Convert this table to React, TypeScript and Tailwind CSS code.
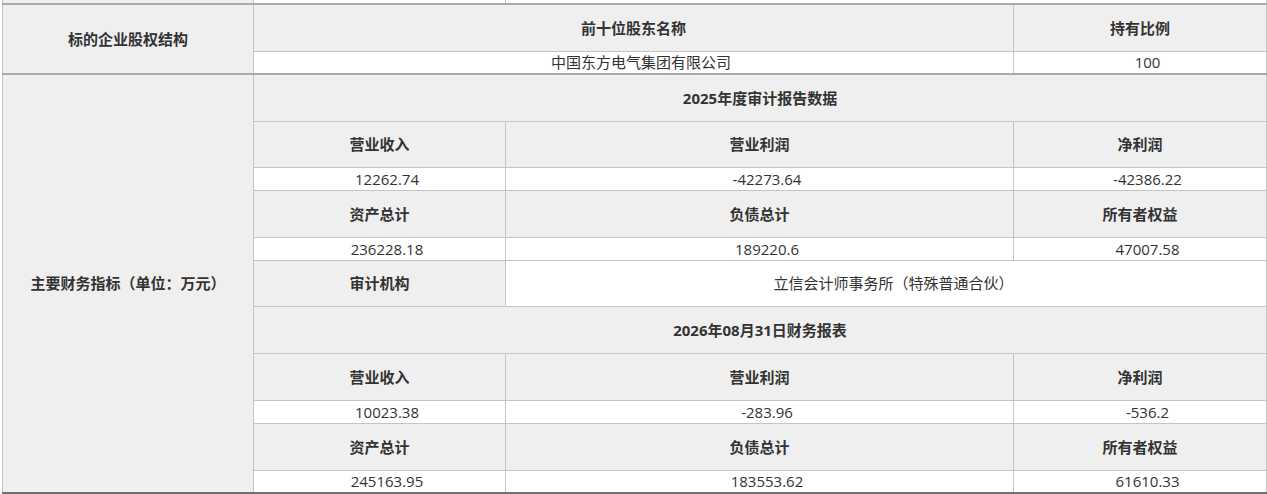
import React from "react";

const th = "border border-[#c4c4c4] bg-[#efefef] font-bold text-center align-middle";
const td = "border border-[#c4c4c4] bg-white text-center align-middle pl-[15px] pr-0";

const hRow = "h-[46px]";
const tRow = "h-[47px]";
const vRow = "h-[23px]";

function Period({
  title,
  rows,
}: {
  title: string;
  rows: { head: [string, string, string]; vals: [string, string, string] }[];
}) {
  return (
    <>
      <tr className={tRow}>
        <td colSpan={3} className={th}>
          {title}
        </td>
      </tr>
      {rows.map((r, i) => (
        <React.Fragment key={i}>
          <tr className={tRow}>
            {r.head.map((h) => (
              <td key={h} className={th}>
                {h}
              </td>
            ))}
          </tr>
          <tr className={vRow}>
            {r.vals.map((v, j) => (
              <td key={j} className={td}>
                {v}
              </td>
            ))}
          </tr>
        </React.Fragment>
      ))}
    </>
  );
}

export default function App() {
  return (
    <div
      className="w-[1267px] h-[494px] overflow-hidden bg-white pl-[2px] text-[15px] text-[#333333] leading-5"
      style={{ fontFamily: '"Open Sans", "Noto Sans CJK SC", sans-serif' }}
    >
      <table className="w-[1264px] table-fixed border-collapse border-b-[3px] border-b-[#6f6f6f]">
        <colgroup>
          <col className="w-[251px]" />
          <col className="w-[252px]" />
          <col className="w-[508px]" />
          <col className="w-[253px]" />
        </colgroup>
        <tbody>
          <tr className="h-[4px]">
            <td className="border-x border-[#c4c4c4] bg-[#efefef] p-0" />
            <td className="border-x border-[#c4c4c4] p-0" />
            <td colSpan={2} className="border-x border-[#c4c4c4] p-0" />
          </tr>
          <tr className={tRow}>
            <td rowSpan={2} className={`${th} border-t-2 border-t-[#aaaaaa]`}>
              标的企业股权结构
            </td>
            <td colSpan={2} className={`${th} border-t-2 border-t-[#aaaaaa]`}>
              前十位股东名称
            </td>
            <td className={`${th} border-t-2 border-t-[#aaaaaa]`}>持有比例</td>
          </tr>
          <tr className={vRow}>
            <td colSpan={2} className={td}>
              中国东方电气集团有限公司
            </td>
            <td className={td}>100</td>
          </tr>
          <tr className={tRow}>
            <td rowSpan={12} className={`${th} border-t-2 border-t-[#aaaaaa]`}>
              主要财务指标（单位：万元）
            </td>
            <td colSpan={3} className={`${th} border-t-2 border-t-[#aaaaaa]`}>
              2025年度审计报告数据
            </td>
          </tr>
          <tr className={hRow}>
            <td className={th}>营业收入</td>
            <td className={th}>营业利润</td>
            <td className={th}>净利润</td>
          </tr>
          <tr className={vRow}>
            <td className={td}>12262.74</td>
            <td className={td}>-42273.64</td>
            <td className={td}>-42386.22</td>
          </tr>
          <tr className={tRow}>
            <td className={th}>资产总计</td>
            <td className={th}>负债总计</td>
            <td className={th}>所有者权益</td>
          </tr>
          <tr className={vRow}>
            <td className={td}>236228.18</td>
            <td className={td}>189220.6</td>
            <td className={td}>47007.58</td>
          </tr>
          <tr className={hRow}>
            <td className={th}>审计机构</td>
            <td colSpan={2} className={td}>
              立信会计师事务所（特殊普通合伙）
            </td>
          </tr>
          <Period
            title="2026年08月31日财务报表"
            rows={[
              { head: ["营业收入", "营业利润", "净利润"], vals: ["10023.38", "-283.96", "-536.2"] },
              { head: ["资产总计", "负债总计", "所有者权益"], vals: ["245163.95", "183553.62", "61610.33"] },
            ]}
          />
        </tbody>
      </table>
    </div>
  );
}
